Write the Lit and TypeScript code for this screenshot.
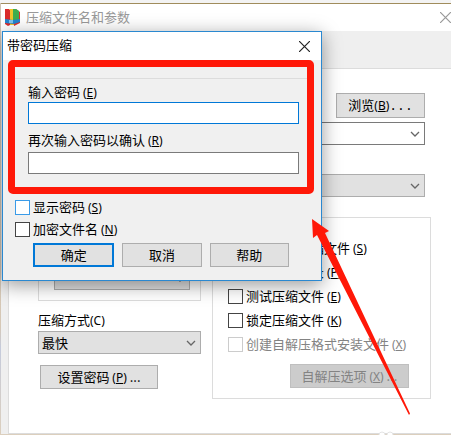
import { LitElement, html, css, svg } from "lit";
import { customElement, state } from "lit/decorators.js";

const chevron = svg`<path d="M1 1l4 4 4-4" fill="none" stroke="#666" stroke-width="1.3"/>`;

@customElement("combo-box")
class ComboBox extends LitElement {
  static properties = { options: { type: Array }, label: {}, plain: { type: Boolean, reflect: true } };
  declare options: string[];
  declare label: string;
  declare plain: boolean;

  static styles = css`
    :host { display: grid; align-items: center; min-width: 0; }
    select, svg { grid-area: 1 / 1; }
    select {
      appearance: none; box-sizing: border-box; width: 100%; height: 23px; margin: 0;
      padding: 0 20px 0 3px; border: 1px solid #adadad; border-radius: 0;
      background: #e1e1e1; color: #000; font: inherit; outline: none;
    }
    :host([plain]) select { background: #fff; border-color: #7a7a7a; }
    svg { justify-self: end; margin-right: 5px; pointer-events: none; }
  `;

  render() {
    return html`
      <select aria-label=${this.label}>
        ${(this.options ?? []).map((o) => html`<option>${o}</option>`)}
      </select>
      <svg width="10" height="6" viewBox="0 0 10 6">${chevron}</svg>`;
  }
}

interface Option { text: string; key: string; disabled?: boolean }

@customElement("app-root")
class AppRoot extends LitElement {
  @state() private archiveOptions: Option[] = [
    { text: "创建固实压缩文件", key: "S" },
    { text: "添加恢复记录", key: "P" },
    { text: "测试压缩文件", key: "E" },
    { text: "锁定压缩文件", key: "K" },
    { text: "创建自解压格式安装文件", key: "X", disabled: true },
  ];

  static styles = css`
    :host {
      display: block; position: relative; overflow: hidden; min-height: 100vh;
      box-sizing: border-box; padding: 3px 0 0 1px; color: #000;
      font: 13px/16px "Noto Sans CJK SC", sans-serif;
      background: linear-gradient(#f3f3f3 3px, #cfc3b5 3px, #d6c8b6 75%, #c5cbdc 80%, #dccfbd);
    }
    * { box-sizing: border-box; }
    .key { font: 12px/16px "Noto Sans", sans-serif; }
    .dots { font-family: "Liberation Mono", monospace; }

    .window { display: flex; flex-direction: column; background: #efefef; border-top: 1px solid #a08c5c; }
    .titlebar { display: flex; align-items: center; height: 27px; padding-left: 3px; gap: 5px; background: #fff; color: #999; }
    .title { flex: 1; margin: 0; padding-bottom: 2px; font: inherit; }
    .close { display: grid; place-items: center; padding: 0; border: 0; background: none; }
    .panel {
      margin: 37px 0 0 7px; padding: 24px 20px 34px 29px; background: #fff;
      border: 1px solid #dcdcdc; border-right: 0;
    }
    .top { display: flex; flex-direction: column; padding-right: 6px; }
    .top .push { align-self: flex-end; width: 89px; height: 25px; margin-bottom: 4px; }
    .top combo-box + combo-box { margin-top: 29px; }
    .columns { display: grid; grid-template-columns: 163px 1fr; gap: 11px; margin-top: 20px; }
    .group { margin: 0; border: 1px solid #dcdcdc; min-width: 0; }
    .volume { height: 84px; padding: 49px 10px 0 15px; }
    .method { display: block; margin: 11px 0 2px; }
    .columns .set { width: 118px; margin: 11px 0 0 2px; }
    .options { height: 182px; padding: 18px 21px 0 15px; }

    .push {
      height: 24px; padding: 0 4px; border: 1px solid #adadad; border-radius: 0;
      background: #e1e1e1; color: #000; font: inherit; white-space: nowrap;
    }
    .push:disabled { background: #ccc; border-color: #bfbfbf; color: #838383; }
    .sfx { display: block; width: 119px; margin: 8px 0 0 auto; }
    .check { display: flex; align-items: center; gap: 3px; white-space: nowrap; }
    .options .check { height: 24px; }
    .check input {
      appearance: none; flex: none; width: 15px; height: 15px; margin: 0;
      border: 1px solid #444; background: #fff;
    }
    .check.active input { border-color: #3a9be8; }
    .check.off { color: #838383; }
    .check.off input { border-color: #ccc; }

    .dialog {
      position: absolute; left: 2px; top: 31px; width: 320px;
      border: 1px solid #2a88d0; background: #f0f0f0; box-shadow: 0 4px 18px rgba(0, 0, 0, 0.4);
    }
    .dialog .titlebar { height: 28px; padding: 0 11px 0 4px; color: #000; }
    .form { padding: 18px 14px 13px 12px; }
    .fields { display: flex; flex-direction: column; border: 0; border-top: 1px solid #dcdcdc; margin: 0; padding: 5px 8px 22px 13px; }
    .field { display: block; height: 18px; }
    .field.next { margin-top: 8px; }
    .entry { width: 100%; height: 22px; padding: 0 4px; border: 1px solid #7a7a7a; border-radius: 0; background: #fff; font: inherit; outline: none; }
    .entry.active { border-color: #0078d7; }
    .entry.next { margin-top: 2px; }
    .form .check { height: 22px; }
    .buttons { display: flex; gap: 8px; margin-top: 3px; padding: 0 18px; }
    .buttons .push { flex: 1; }
    .buttons .primary { border: 2px solid #0078d7; }
    .frame { position: absolute; inset: 28px 7px 86px 5px; border: 7px solid #ff1808; border-radius: 5px; pointer-events: none; }
    .arrow { position: absolute; left: 312px; top: 219px; pointer-events: none; }
    .watermark { position: absolute; left: 378px; bottom: 0; pointer-events: none; }
  `;

  private key(k: string) {
    return html`<span class="key">(<u>${k}</u>)</span>`;
  }

  private check(o: Option, cls = "") {
    return html`<label class="check ${cls} ${o.disabled ? "off" : ""}">
      <input type="checkbox" ?disabled=${o.disabled ?? false}><span>${o.text} ${this.key(o.key)}</span>
    </label>`;
  }

  private cross(color: string) {
    return html`<svg width="11" height="11" viewBox="0 0 11 11"><path d="M0 0L11 11M11 0L0 11" stroke=${color} stroke-width="1.2"/></svg>`;
  }

  render() {
    return html`
      <main class="window">
        <header class="titlebar">
          <svg width="17" height="18" viewBox="0 0 17 18">
            <path d="M1 0h4l1 1v15l-2 1-3-2z" fill="#d92b2b"/>
            <path d="M5 0h4l1 1v15H6V1z" fill="#f0c52c"/>
            <path d="M9 0h3l4 3v11l-6 3z" fill="#dc3030"/>
            <path d="M9 0h3l3 2v9H9z" fill="#3fae4f"/>
            <path d="M1 10l8 1 7-1v3l-6 2-9-1z" fill="#2584cf"/>
            <path d="M5 11h4v3H5z" fill="#7fc4ee"/>
          </svg>
          <h1 class="title">压缩文件名和参数</h1>
          <button class="close" aria-label="关闭">${this.cross("#999")}</button>
        </header>
        <section class="panel">
          <div class="top">
            <button class="push">浏览<span class="key">(<u>B</u>)</span><span class="dots">...</span></button>
            <combo-box plain label="压缩文件名"></combo-box>
            <combo-box label="更新方式"></combo-box>
          </div>
          <div class="columns">
            <div>
              <fieldset class="group volume"><combo-box label="分卷大小"></combo-box></fieldset>
              <span class="method">压缩方式<span class="key">(C)</span></span>
              <combo-box label="压缩方式" .options=${["最快"]}></combo-box>
              <button class="push set">设置密码 ${this.key("P")} ...</button>
            </div>
            <fieldset class="group options">
              ${this.archiveOptions.map((o) => this.check(o))}
              <button class="push sfx" disabled>自解压选项 ${this.key("X")} ...</button>
            </fieldset>
          </div>
        </section>
      </main>

      <section class="dialog" role="dialog" aria-labelledby="dialog-title">
        <header class="titlebar">
          <h2 class="title" id="dialog-title">带密码压缩</h2>
          <button class="close" aria-label="关闭">${this.cross("#222")}</button>
        </header>
        <div class="form">
          <fieldset class="fields">
            <label class="field" for="password">输入密码 ${this.key("E")}</label>
            <input class="entry active" id="password" type="password">
            <label class="field next" for="confirm">再次输入密码以确认 ${this.key("R")}</label>
            <input class="entry next" id="confirm" type="password">
          </fieldset>
          ${this.check({ text: "显示密码", key: "S" }, "active")}
          ${this.check({ text: "加密文件名", key: "N" })}
          <div class="buttons">
            <button class="push primary">确定</button>
            <button class="push">取消</button>
            <button class="push">帮助</button>
          </div>
        </div>
        <div class="frame"></div>
      </section>
      <svg class="arrow" width="100" height="197" viewBox="0 0 100 197">
        <path d="M0 0L17 12L13 14L98 194.500L97 196L5 16L1 19Z" fill="#ff1808"/>
      </svg>
      <svg class="watermark" width="16" height="4" viewBox="0 0 16 4">
        <circle cx="4" cy="4" r="3" fill="#fff" stroke="#e4e4e4"/>
        <circle cx="12" cy="4" r="3" fill="#fff" stroke="#e4e4e4"/>
      </svg>`;
  }
}
